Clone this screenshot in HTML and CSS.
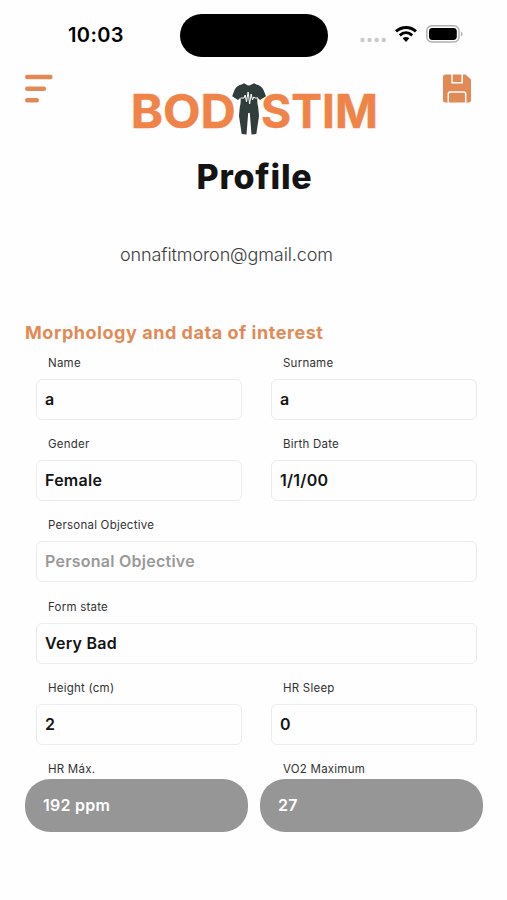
FILE: index.html
```
<!DOCTYPE html>
<html lang="en">
<head>
  <meta charset="utf-8">
  <meta name="viewport" content="width=device-width, initial-scale=1">
  <title>Bodystim - Profile</title>
  <link rel="stylesheet" href="styles.css">
</head>
<body>
  <div class="status-bar">
    <span class="clock">10:03</span>
    <div class="island"></div>
    <svg class="status-icons" width="106" height="24" viewBox="0 0 106 24">
      <g fill="#c9c9c9">
        <circle cx="4.5" cy="17" r="2.2"/>
        <circle cx="11.6" cy="17" r="2.2"/>
        <circle cx="18.7" cy="17" r="2.2"/>
        <circle cx="25.8" cy="17" r="2.2"/>
      </g>
      <g fill="none" stroke="#000" stroke-width="3">
        <path d="M38 8.300c5.800-5.200 14.200-5.200 20 0"/>
        <path d="M41.800 12.300c3.700-3.300 8.700-3.300 12.400 0"/>
      </g>
      <path d="M44.600 15.300c2-1.700 4.800-1.700 6.800 0L48 18.900z"/>
      <rect x="68.800" y="2.800" width="32.200" height="16.200" rx="5" fill="none" stroke="#b0b0b0" stroke-width="1.500"/>
      <rect x="71" y="5" width="27.800" height="12" rx="3.400"/>
      <path d="M103 8.400c2 .8 2 4.200 0 5z" fill="#b0b0b0"/>
    </svg>
  </div>

  <header class="header">
    <svg class="menu-icon" width="28" height="30" viewBox="0 0 28 30">
      <g stroke="#e28a56" stroke-width="4.400" stroke-linecap="round">
        <path d="M2.200 3h23.200"/>
        <path d="M2.200 14.700h16.700"/>
        <path d="M2.200 26.300h9.600"/>
      </g>
    </svg>
    <svg class="logo" width="252" height="56" viewBox="0 0 252 56">
      <g class="logo-text">
        <text x="1.800" y="46" textLength="105" lengthAdjust="spacingAndGlyphs">BOD</text>
        <text x="132" y="46" textLength="117" lengthAdjust="spacingAndGlyphs">STIM</text>
      </g>
      <path fill="#303d3b" d="M112.500 2.500L115 1.200L117.300 2.500Q119.500 4.500 122.500 2.500L125 1.200L127.500 2.500Q132.500 3.500 134.500 8L137 14.200L131 18L128.500 15.500Q127.800 20 129.200 25L130 34L127.300 52L122.500 52.500L120.800 31H119.200L117.500 52.500L112.700 52L110 34L110.800 25Q112.200 20 111.500 15.500L109 18L103.200 14.200L105.500 8Q107.500 3.500 112.500 2.500Z"/>
      <path fill="none" stroke="#fff" stroke-width="1" stroke-linejoin="round" d="M112 16h3l1.200-3 1.300 7 1.600-10 1.500 12 1.500-10 1.400 6 1.200-3 1.300 1h3"/>
    </svg>
    <svg class="save-icon" width="28" height="29" viewBox="0 0 28 29">
      <path fill="#e28a56" d="M2.500 .4H22.500L28 5.600V26a2.500 2.500 0 0 1-2.500 2.500H2.500A2.500 2.500 0 0 1 0 26V2.900A2.500 2.500 0 0 1 2.500 .4Z"/>
      <path fill="none" stroke="#fff" stroke-width="1.500" d="M9 0v8.800h10.200V0M5.300 28.500V20q0-2 2-2h13.400q2 0 2 2v8.500"/>
    </svg>
  </header>

  <h1 class="title">Profile</h1>
  <p class="email">onnafitmoron@gmail.com</p>

  <h2 class="section-title">Morphology and data of interest</h2>
  <div class="form">
    <div class="field">
      <span class="label">Name</span>
      <div class="box"><span class="value">a</span></div>
    </div>
    <div class="field">
      <span class="label">Surname</span>
      <div class="box"><span class="value">a</span></div>
    </div>
    <div class="field">
      <span class="label">Gender</span>
      <div class="box"><span class="value">Female</span></div>
    </div>
    <div class="field">
      <span class="label">Birth Date</span>
      <div class="box"><span class="value">1/1/00</span></div>
    </div>
    <div class="field wide">
      <span class="label">Personal Objective</span>
      <div class="box"><span class="value placeholder">Personal Objective</span></div>
    </div>
    <div class="field wide">
      <span class="label">Form state</span>
      <div class="box"><span class="value">Very Bad</span></div>
    </div>
    <div class="field">
      <span class="label">Height (cm)</span>
      <div class="box"><span class="value">2</span></div>
    </div>
    <div class="field">
      <span class="label">HR Sleep</span>
      <div class="box"><span class="value">0</span></div>
    </div>
    <div class="field">
      <span class="label">HR Máx.</span>
      <div class="pill"><span class="value">192 ppm</span></div>
    </div>
    <div class="field">
      <span class="label">VO2 Maximum</span>
      <div class="pill"><span class="value">27</span></div>
    </div>
  </div>
</body>
</html>
```
FILE: styles.css
```
*, :after, :before { box-sizing: border-box; }
body {
  background: #fefefe;
  color: #141414;
  font-family: Inter, "Liberation Sans", sans-serif;
  height: 900px;
  margin: 0;
  overflow: hidden;
}
.status-bar {
  display: grid;
  grid-template-columns: 180px 148px 1fr;
  align-items: center;
  height: 70px;
}
.clock {
  color: #000;
  font-size: 20px;
  font-weight: 600;
  letter-spacing: .4px;
  padding-left: 68px;
}
.island {
  background: #000;
  border-radius: 22px;
  height: 43px;
}
.status-icons { margin: 0 0 0 30px; }
.header {
  display: flex;
  align-items: flex-start;
  height: 80px;
  padding: 4px 36px 0 25px;
}
.header svg { flex: none; }
.logo { margin: 8px 0 0 76px; }
.logo-text {
  fill: #f08448;
  font-size: 46px;
  font-weight: 700;
  stroke: #f08448;
  stroke-width: .5px;
}
.save-icon { margin-left: auto; }
.title {
  font-size: 34px;
  font-weight: 800;
  letter-spacing: .8px;
  line-height: 40px;
  margin: 7px 0 0;
  padding-left: 2px;
  text-align: center;
}
.email {
  color: #3c3c3c;
  font-size: 18px;
  font-weight: 300;
  letter-spacing: -.1px;
  line-height: 24px;
  margin: 46px 0 0 120px;
}
.section-title {
  color: #e28a56;
  font-size: 18px;
  font-weight: 700;
  letter-spacing: .54px;
  line-height: 24px;
  margin: 54px 0 0 25px;
}
.form {
  display: grid;
  grid-template-columns: 206px 206px;
  column-gap: 29px;
  row-gap: 16px;
  padding: 10px 0 0 36px;
}
.field { height: 65.2px; }
.wide { grid-column: span 2; }
.label {
  color: #333;
  display: block;
  font-size: 11.5px;
  letter-spacing: .23px;
  line-height: 16px;
  padding-left: 12px;
}
.box {
  display: flex;
  align-items: center;
  border: 1px solid #ececec;
  border-radius: 6px;
  height: 41px;
  margin-top: 8px;
  padding: 0 0 1px 8px;
}
.value {
  font-size: 16px;
  font-weight: 600;
  letter-spacing: .25px;
}
.placeholder { color: #999; }
.pill {
  display: flex;
  align-items: center;
  background: #969696;
  border-radius: 25px;
  color: #fff;
  height: 53px;
  margin: 2px -6px 0 -11.5px;
  padding-left: 18.5px;
}
```
